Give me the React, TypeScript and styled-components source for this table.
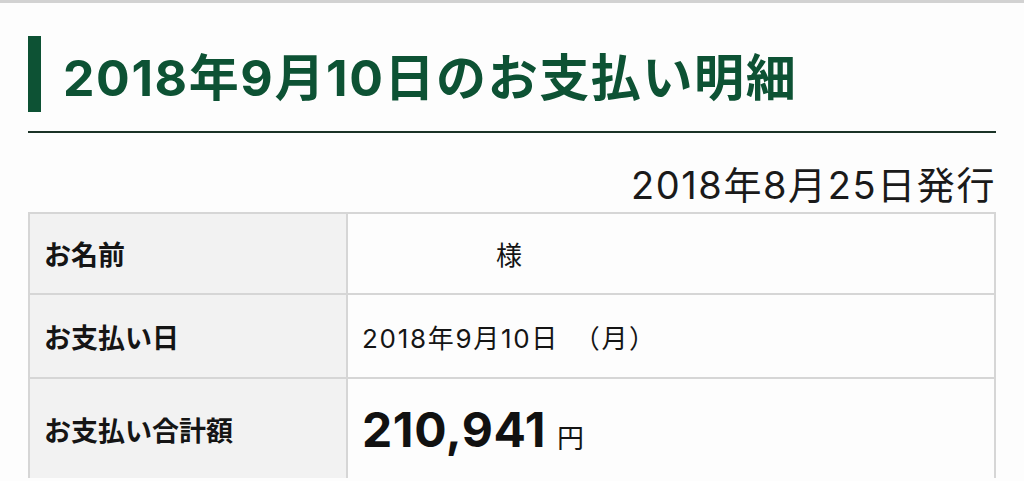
import React from "react";
import styled, { createGlobalStyle } from "styled-components";

const GlobalStyle = createGlobalStyle`
  html, body {
    margin: 0;
    padding: 0;
    background: #fdfdfd;
  }
  body {
    font-family: "Inter", "Noto Sans CJK JP", sans-serif;
    color: #151515;
  }
`;

const Page = styled.div`
  border-top: 3px solid #d2d2d2;
  padding: 33px 28px 0;
  height: 478px;
  overflow: hidden;
  box-sizing: border-box;
`;

const TitleBlock = styled.div`
  border-bottom: 2px solid #1b3327;
  padding-bottom: 19px;
`;

const Title = styled.h1`
  margin: 0;
  height: 76px;
  border-left: 13px solid #0d5234;
  padding-left: 22px;
  display: flex;
  align-items: center;
  font-family: "Inter", "Noto Sans CJK JP", sans-serif;
  font-weight: 700;
  font-size: 50px;
  letter-spacing: 1.6px;
  color: #0d5234;
  white-space: nowrap;
`;

const IssueDate = styled.div`
  text-align: right;
  padding: 28px 0 3px;
  line-height: 48px;
  font-size: 38px;
  font-weight: 400;
  color: #1a1a1a;
  letter-spacing: 1.6px;
`;

const Table = styled.div`
  border: 2px solid #d6d6d6;
  border-bottom: none;
`;

const Row = styled.div<{ $h: number }>`
  display: grid;
  grid-template-columns: 318px 1fr;
  height: ${(p) => p.$h}px;
  border-bottom: 2px solid #d6d6d6;
`;

const Label = styled.div`
  background: #f2f2f2;
  border-right: 2px solid #d6d6d6;
  display: flex;
  align-items: center;
  padding-left: 14px;
  font-family: "Noto Sans CJK JP", sans-serif;
  font-weight: 700;
  font-size: 27px;
  color: #151515;
`;

const Value = styled.div`
  display: flex;
  align-items: center;
  padding-left: 14px;
  font-size: 26px;
  font-weight: 400;
  color: #151515;
  letter-spacing: 1.7px;
`;

const NameBlank = styled.span`
  display: inline-block;
  width: 134px;
`;

const Amount = styled.span`
  font-size: 48px;
  font-weight: 700;
  color: #111;
  letter-spacing: 0.6px;
`;

const Yen = styled.span`
  font-family: "Noto Sans CJK JP", sans-serif;
  font-size: 27px;
  font-weight: 400;
  margin-left: 11px;
  margin-top: 14px;
`;

export default function App() {
  return (
    <>
      <GlobalStyle />
      <Page>
        <TitleBlock>
          <Title>2018年9月10日のお支払い明細</Title>
        </TitleBlock>
        <IssueDate>2018年8月25日発行</IssueDate>
        <Table>
          <Row $h={79}>
            <Label>お名前</Label>
            <Value>
              <NameBlank />様
            </Value>
          </Row>
          <Row $h={82}>
            <Label>お支払い日</Label>
            <Value>2018年9月10日　（月）</Value>
          </Row>
          <Row $h={101}>
            <Label>お支払い合計額</Label>
            <Value>
              <Amount>210,941</Amount>
              <Yen>円</Yen>
            </Value>
          </Row>
          <Row $h={80}>
            <Label />
            <Value />
          </Row>
        </Table>
      </Page>
    </>
  );
}
